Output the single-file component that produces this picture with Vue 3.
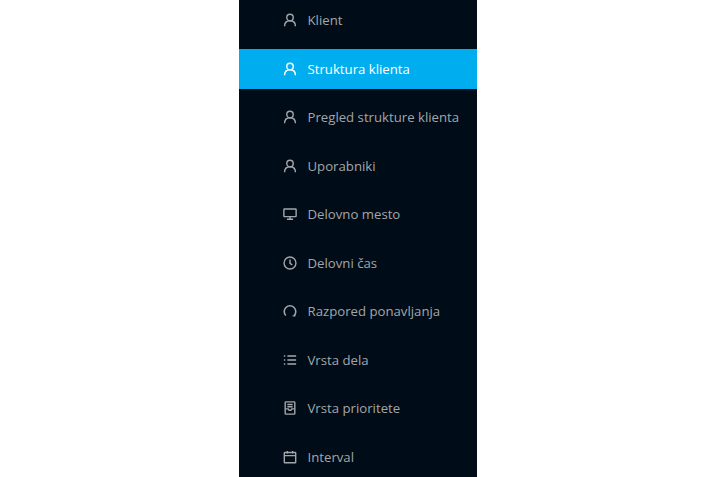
<template>
  <div class="page">
    <nav class="sidebar">
      <a v-for="item in items" :key="item.label" class="item" :class="{ active: item.active }">
        <svg class="icon" viewBox="0 0 16 16" fill="none" stroke="currentColor" stroke-width="1.6" v-html="icons[item.icon]"></svg>
        <span>{{ item.label }}</span>
      </a>
    </nav>
  </div>
</template>

<script setup>
const icons = {
  user: '<circle cx="8" cy="5.2" r="3.7"/><path d="M1.8 15c0-3.8 2.6-6.2 6.2-6.2s6.2 2.4 6.2 6.2"/>',
  desktop: '<rect x="1" y="2.2" width="14" height="8.8" rx=".6"/><path d="M8 11v3M4.5 14h7"/>',
  clock: '<circle cx="8" cy="8" r="6.8"/><path d="M8 4v4.4l2.6 1.8"/>',
  sync: '<path d="M3.2 13.2A6.6 6.6 0 1 1 12.8 13.2" stroke-width="1.8"/><path d="M11 13.6h2.4v-2.2"/>',
  list: '<path d="M5 3.5h10M5 8h10M5 12.5h10M1 3.5h1.6M1 8h1.6M1 12.5h1.6"/>',
  priority: '<rect x="2.5" y="1" width="11" height="14" rx=".8"/><path d="M5 4h6M5 6.5h6M2.5 9H6l1 1.6h2L10 9h3.5"/>',
  calendar: '<rect x="1.5" y="2.8" width="13" height="11.7" rx=".6"/><path d="M1.5 6.4h13M5 1v3M11 1v3"/>'
}

const items = [
  { label: 'Klient', icon: 'user' },
  { label: 'Struktura klienta', icon: 'user', active: true },
  { label: 'Pregled strukture klienta', icon: 'user' },
  { label: 'Uporabniki', icon: 'user' },
  { label: 'Delovno mesto', icon: 'desktop' },
  { label: 'Delovni čas', icon: 'clock' },
  { label: 'Razpored ponavljanja', icon: 'sync' },
  { label: 'Vrsta dela', icon: 'list' },
  { label: 'Vrsta prioritete', icon: 'priority' },
  { label: 'Interval', icon: 'calendar' }
]
</script>

<style scoped>
.page {
  width: 717px;
  height: 477px;
  overflow: hidden;
  background: #fff;
  display: flex;
  justify-content: center;
  padding-right: 2px;
  box-sizing: border-box;
}

.sidebar {
  width: 238px;
  height: 477px;
  overflow: hidden;
  background: #000c17;
  display: flex;
  flex-direction: column;
  gap: 8px;
  font-family: "Open Sans", sans-serif;
  font-size: 13.2px;
  font-weight: 500;
}

.item {
  flex: none;
  height: 40.5px;
  display: flex;
  align-items: center;
  gap: 11px;
  padding-left: 44px;
  color: #a3a6a9;
}

.item.active {
  background: #00aeef;
  color: #fff;
}

.icon {
  width: 14px;
  height: 14px;
  flex: none;
}
</style>
